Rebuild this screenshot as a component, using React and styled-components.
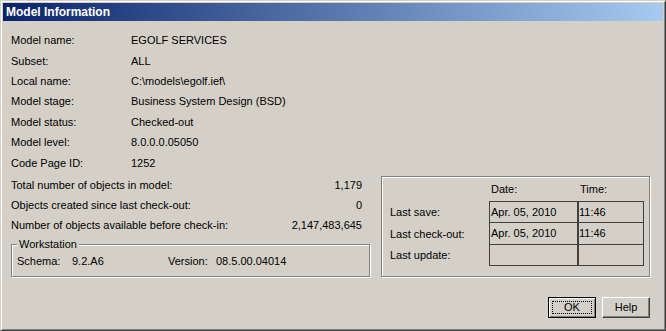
import React from "react";
import styled, { createGlobalStyle } from "styled-components";

const GlobalStyle = createGlobalStyle`
  * {
    box-sizing: border-box;
  }
  body {
    margin: 0;
    background: #d4d0c8;
  }
`;

const Window = styled.div`
  width: 666px;
  height: 331px;
  display: flex;
  flex-direction: column;
  padding: 2px;
  background: #d4d0c8;
  border: 1px solid;
  border-color: #d4d0c8 #404040 #404040 #d4d0c8;
  box-shadow: inset 1px 1px #fff, inset -1px -1px #808080;
  font-family: "Liberation Sans", Arial, sans-serif;
  font-size: 11px;
  color: #000;
`;

const TitleBar = styled.div`
  height: 18px;
  display: flex;
  align-items: center;
  padding-left: 3px;
  background: linear-gradient(to right, #0a246a, #a6caf0);
  color: #fff;
  font-weight: bold;
  font-size: 12px;
`;

const Body = styled.div`
  flex: 1;
  display: flex;
  flex-direction: column;
  padding: 9px 13px 0 8px;
`;

const InfoList = styled.div`
  display: grid;
  grid-template-columns: 120px auto;
  grid-auto-rows: 20.4px;
  align-items: center;
`;

const BottomArea = styled.div`
  display: grid;
  grid-template-columns: 359px 269px;
  column-gap: 11px;
  align-items: end;
`;

const CountList = styled.div`
  padding-top: 2px;
`;

const CountRow = styled.div`
  height: 20px;
  display: flex;
  align-items: center;
  justify-content: space-between;
  padding-right: 8px;
`;

const GroupBox = styled.fieldset`
  margin: 3px 0 0;
  padding: 2px 6px 7px 5px;
  border: 1px solid #808080;
  box-shadow: inset 1px 1px #fff, 1px 1px #fff;
  min-inline-size: 0;
`;

const GroupLabel = styled.legend`
  padding: 0 2px;
  line-height: 13px;
  background: #d4d0c8;
`;

const SchemaRow = styled.div`
  display: flex;
  line-height: 16px;
`;

const Field = styled.span`
  width: ${(p) => p.$w}px;
  flex: none;
`;

const DatesBox = styled.div`
  display: grid;
  grid-template-columns: 99px 89px 66px;
  grid-template-rows: 24px 22px 22px 21px;
  padding: 0 0 10px 8px;
  border: 1px solid #808080;
  box-shadow: inset 1px 1px #fff, 1px 1px #fff;
`;

const HeadCell = styled.div`
  display: flex;
  align-items: center;
  padding-left: 2px;
`;

const RowLabel = styled.div`
  display: flex;
  align-items: center;
`;

const Cell = styled.div`
  display: flex;
  align-items: center;
  padding-left: ${(p) => (p.$time ? 0 : 1)}px;
  border: 1px solid #404040;
  border-top-width: ${(p) => (p.$first ? 1 : 0)}px;
`;

const ButtonRow = styled.div`
  display: flex;
  justify-content: flex-end;
  gap: 6px;
  margin-top: 20px;
`;

const Button = styled.button`
  position: relative;
  width: 48px;
  height: 21px;
  padding: 0;
  font: inherit;
  color: #000;
  background: #d4d0c8;
  border: 1px solid;
  border-color: ${(p) => (p.$default ? "#000" : "#fff #404040 #404040 #fff")};
  box-shadow: ${(p) =>
    p.$default
      ? "inset 1px 1px #fff, inset -1px -1px #808080"
      : "inset -1px -1px #808080"};
  &::after {
    content: "";
    display: ${(p) => (p.$default ? "block" : "none")};
    position: absolute;
    inset: 3px;
    border: 1px dotted #000;
  }
`;

const info = [
  ["Model name:", "EGOLF SERVICES"],
  ["Subset:", "ALL"],
  ["Local name:", "C:\\models\\egolf.ief\\"],
  ["Model stage:", "Business System Design (BSD)"],
  ["Model status:", "Checked-out"],
  ["Model level:", "8.0.0.0.05050"],
  ["Code Page ID:", "1252"],
];

const counts = [
  ["Total number of objects in model:", "1,179"],
  ["Objects created since last check-out:", "0"],
  ["Number of objects available before check-in:", "2,147,483,645"],
];

const dates = [
  ["Last save:", "Apr. 05, 2010", "11:46"],
  ["Last check-out:", "Apr. 05, 2010", "11:46"],
  ["Last update:", "", ""],
];

export default function App() {
  return (
    <>
      <GlobalStyle />
      <Window>
        <TitleBar>Model Information</TitleBar>
        <Body>
          <InfoList>
            {info.map(([label, value]) => (
              <React.Fragment key={label}>
                <span>{label}</span>
                <span>{value}</span>
              </React.Fragment>
            ))}
          </InfoList>
          <BottomArea>
            <CountList>
              {counts.map(([label, value]) => (
                <CountRow key={label}>
                  <span>{label}</span>
                  <span>{value}</span>
                </CountRow>
              ))}
              <GroupBox>
                <GroupLabel>Workstation</GroupLabel>
                <SchemaRow>
                  <Field $w={55}>Schema:</Field>
                  <Field $w={96}>9.2.A6</Field>
                  <Field $w={48}>Version:</Field>
                  <span>08.5.00.04014</span>
                </SchemaRow>
              </GroupBox>
            </CountList>
            <DatesBox>
              <span />
              <HeadCell>Date:</HeadCell>
              <HeadCell>Time:</HeadCell>
              {dates.map(([label, date, time], i) => (
                <React.Fragment key={label}>
                  <RowLabel>{label}</RowLabel>
                  <Cell $first={i === 0}>{date}</Cell>
                  <Cell $first={i === 0} $time>
                    {time}
                  </Cell>
                </React.Fragment>
              ))}
            </DatesBox>
          </BottomArea>
          <ButtonRow>
            <Button $default>OK</Button>
            <Button>Help</Button>
          </ButtonRow>
        </Body>
      </Window>
    </>
  );
}
